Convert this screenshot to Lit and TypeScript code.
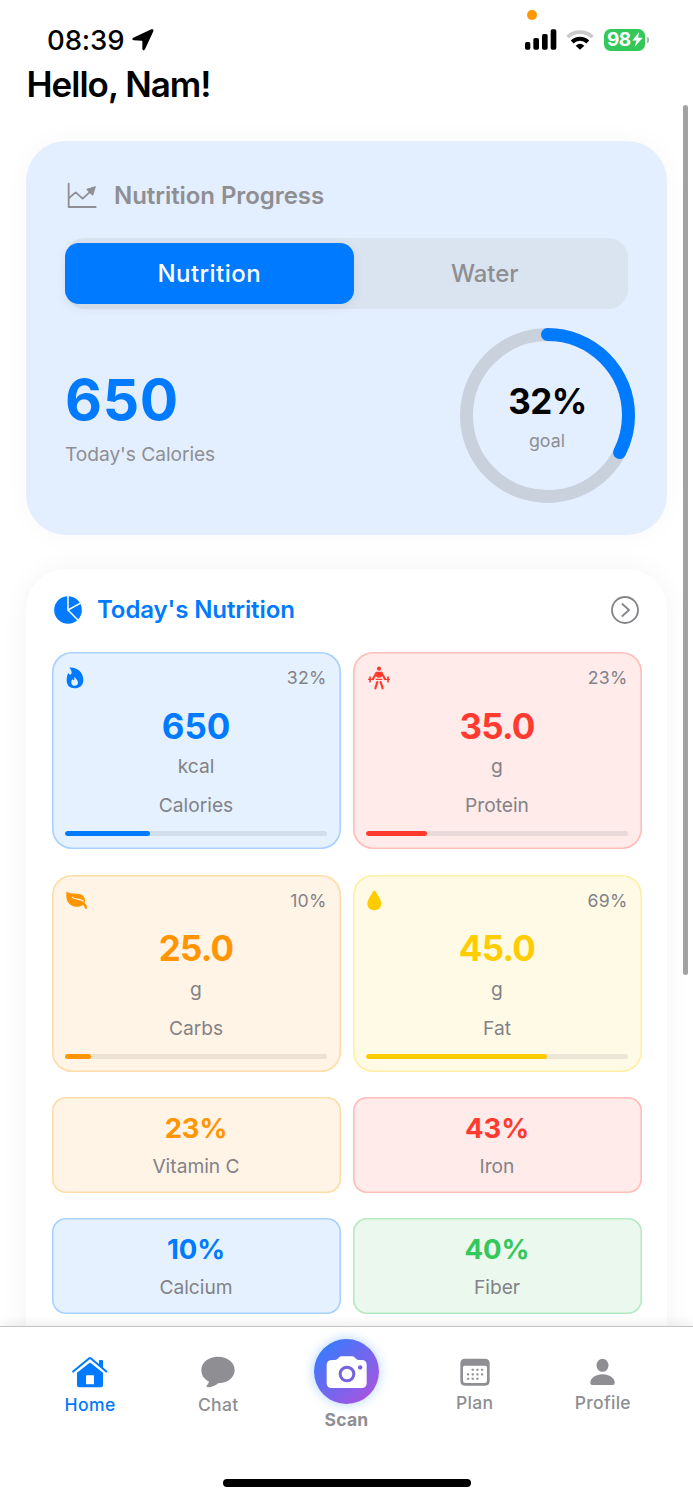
import { LitElement, html, svg, css, nothing } from "lit";
import { customElement, property } from "lit/decorators.js";

const icons: Record<string, unknown> = {
  location: html`<svg width="22" height="22" viewBox="397 87 66 66"><path fill="#000" d="M455 88 L401 113 Q394 118 402 121 L426 122 Q428 122 428 124 L428 147 Q431 155 436 148 L461 94 Q463 86 455 88Z"/></svg>`,
  signal: html`<svg width="32" height="21" viewBox="75 86 96 63"><rect x="75" y="125" width="16" height="23" rx="5"/><rect x="100" y="113" width="17" height="35" rx="5"/><rect x="126" y="101" width="17" height="47" rx="5"/><rect x="152" y="87" width="17" height="61" rx="5"/></svg>`,
  wifi: html`<svg width="28" height="21" viewBox="199 86 84 63"><g fill="none"><path stroke="#cbcbcb" stroke-width="11" d="M203.500 110 A55 55 0 0 1 278.500 110"/><path stroke="#000" stroke-width="12" d="M217.500 125 A34 34 0 0 1 264.500 125"/></g><path d="M241 148 L228 136 Q241 125 254 136Z"/></svg>`,
  bolt: html`<svg width="11" height="15" viewBox="396 97 32 46"><path fill="#fff" d="M417 97 L396 123 H409 L403 143 L428 115 H414Z"/></svg>`,
  chart: html`<svg width="31" height="27" viewBox="143 158 93 81"><g fill="none" stroke="#8e8e93" stroke-width="5.500" stroke-linecap="round" stroke-linejoin="round"><path d="M148 163 V233 H229"/><path d="M149 206 L169 189 L190 208 L217 183"/></g><path fill="#8e8e93" stroke="#8e8e93" stroke-width="3" stroke-linejoin="round" d="M228 172 L202 180 L220 198Z"/></svg>`,
  pie: html`<svg width="28" height="28" viewBox="102 710 84 84"><circle cx="144" cy="752" r="41.500" fill="#007aff"/><path d="M144 706 V752 L186 729 M144 752 L176 784" fill="none" stroke="#fff" stroke-width="4.500"/></svg>`,
  more: html`<svg width="28" height="28" viewBox="798 49 84 84"><g fill="none" stroke="#85858a" stroke-width="5.500"><circle cx="840" cy="91" r="39"/><path d="M832 73 L852 91 L832 109" stroke-linecap="round" stroke-linejoin="round"/></g></svg>`,
  flame: html`<svg width="18" height="22" viewBox="77 82 54 66"><path fill="currentColor" d="M87 84 C110 82 129 98 129 121 C129 137 118 146 103 146 C88 146 79 137 79 122 C79 112 81 106 84 100 C86 103 88 105 91 105 C97 100 93 90 87 84Z"/><path fill="#e5f1ff" d="M103 111 C105 117 113 120 113 129 C113 135 108 138 103 138 C97 138 93 134 93 129 C93 124 94 121 96 119 C98 121 99 122 101 122 C103 119 101 114 103 111Z"/></svg>`,
  lifter: html`<svg width="24" height="24" viewBox="67 258 72 72"><g fill="none" stroke="currentColor" stroke-linecap="round" stroke-linejoin="round"><path stroke-width="6.500" d="M95 279 L85 297 M111 279 L121 297"/><path stroke-width="6.500" d="M98 306 L92 325 M108 306 L114 325"/><path stroke-width="5" d="M76 291 V305 M130 291 V305"/><path stroke-width="3.500" stroke-linecap="butt" d="M70 298 H88 M118 298 H136 M93 298 H113"/></g><g fill="currentColor"><circle cx="103" cy="266" r="6.200"/><path d="M95 275.500 H111 L114 280 L111 290 Q107 293 103 293 Q99 293 95 290 L92 280Z"/></g></svg>`,
  leaf: html`<svg width="22" height="19" viewBox="79 80 65 57"><path fill="currentColor" d="M82 82 C89 90 108 85 122 90 C134 94 138 106 134 116 C140 120 142 127 141 133 Q138 136 135 132 C134 127 132 124 129 122 C119 130 99 129 88 118 C78 108 79 94 80 83 Q81 81 82 82Z"/><path d="M97 98 C104 107 120 102 130 110" fill="none" stroke="#fff4e6" stroke-width="3.500" stroke-linecap="round"/></svg>`,
  drop: html`<svg width="15" height="21" viewBox="65 76 45 62"><path fill="currentColor" d="M87 77 Q90 77 94 85 C101 97 108 106 108 116 C108 129 99 136 87 136 C75 136 66 129 66 116 C66 106 73 97 80 85 Q84 77 87 77Z"/></svg>`,
  home: html`<svg width="36" height="32" viewBox="96 107 108 96"><path fill="#007aff" fill-rule="evenodd" d="M111 157 L148 128 Q150 126.500 152 128 L189 157 V193 Q189 201 181 201 H119 Q111 201 111 193Z M140 165 Q138 165 138 167 V192 H162 V167 Q162 165 160 165Z"/><path fill="#007aff" d="M177 133 V122 Q177 119 180 119 H186 Q189 119 189 122 V143Z"/><path d="M99.500 153.500 L147 114.500 Q150 112 153 114.500 L199 153.500" fill="none" stroke="#007aff" stroke-width="6" stroke-linecap="round"/></svg>`,
  chat: html`<svg width="34" height="32" viewBox="482 107 102 96"><path fill="#8e8e93" d="M533 109 C561 109 583 126 583 149 C583 172 561 189 533 189 C527 195 514 201 502 201 Q496 200 499 196 C503 192 506 188 505 183 C491 176 483 164 483 149 C483 126 505 109 533 109Z"/></svg>`,
  camera: html`<svg width="42" height="34" viewBox="856 102 126 102"><path fill="#fff" d="M875 117 H882 Q887 117 891 113 L894 110 Q898 106 904 106 H933 Q939 106 943 110 L946 113 Q950 117 955 117 H963 Q978 117 978 132 V186 Q978 201 963 201 H873 Q858 201 858 186 V132 Q858 117 875 117Z"/><circle cx="919" cy="159" r="20.500" fill="none" stroke="#7664df" stroke-width="9"/><circle cx="958.500" cy="139.500" r="6.500" fill="#7d60dd"/></svg>`,
  calendar: html`<svg width="30" height="28" viewBox="479 112 90 84"><path fill="#8e8e93" fill-rule="evenodd" d="M494 114 H554 Q568 114 568 128 V181 Q568 195 554 195 H494 Q480 195 480 181 V128 Q480 114 494 114Z M493 135 Q488 135 488 140 V180 Q488 187 495 187 H553 Q560 187 560 180 V140 Q560 135 555 135Z"/>${[
    [517, 147], [531, 147], [545, 147], [503, 161], [517, 161], [531, 161], [545, 161], [503, 174], [517, 174], [531, 174],
  ].map(([x, y]) => svg`<rect x=${x - 3} y=${y - 3} width="6.500" height="6.500" rx="2" fill="#8e8e93"/>`)}</svg>`,
  profile: html`<svg width="25" height="28" viewBox="871 112 75 84"><ellipse cx="908.500" cy="134" rx="18" ry="19.500" fill="#8e8e93"/><path fill="#8e8e93" d="M880 193 Q872 193 872 186 C872 172 888 161 908.500 161 C929 161 945 172 945 186 Q945 193 937 193Z"/></svg>`,
};

@customElement("nutrient-card")
class NutrientCard extends LitElement {
  @property() icon = "";
  @property() tone = "blue";
  @property() value = "";
  @property() unit = "";
  @property() label = "";
  @property() percent = "";
  @property({ type: Number }) fill = 0;

  static styles = css`
    :host { display: block; min-width: 0; }
    svg { display: block; }
    .card { box-sizing: border-box; height: 100%; box-shadow: inset 0 0 0 1.600px var(--line); background: var(--bg); color: var(--main); display: flex; flex-direction: column; text-align: center; }
    .full { border-radius: 20px; padding: 14.400px 13.500px 0; }
    .mini { border-radius: 14px; padding: 15px 13.500px 0; }
    .blue { --main: #007aff; --bg: #e5f1ff; --line: #a9d1ff; }
    .red { --main: #ff3b30; --bg: #ffebea; --line: #ffbdb9; }
    .orange { --main: #ff9500; --bg: #fff4e6; --line: #ffdca8; }
    .yellow { --main: #ffcc00; --bg: #fffae6; --line: #ffeea6; }
    .green { --main: #34c759; --bg: #eaf8ed; --line: #b6eac3; }
    .top { display: flex; height: 24px; align-items: center; justify-content: space-between; }
    .icon { display: flex; padding-left: 1px; }
    .percent { margin-right: 0.500px; font-size: 17.700px; font-weight: 420; letter-spacing: 0.200px; line-height: 24px; color: #828287; }
    .value { margin-top: 13.200px; font-size: 35px; font-weight: 700; line-height: 44px; letter-spacing: -0.100px; }
    .decimal { letter-spacing: -0.800px; }
    .unit, .label { color: #828287; font-size: 19.200px; line-height: 24px; letter-spacing: 0; }
    .unit { margin-top: 6.600px; }
    .label { margin-top: 15.100px; }
    .track { margin-top: 13.700px; height: 5px; border-radius: 3px; background: rgba(60, 60, 67, 0.1); overflow: hidden; }
    .bar { height: 100%; border-radius: 3px; background: var(--main); }
    .mini .value { margin-top: 0; font-size: 27.500px; line-height: 32px; }
    .mini .label { margin-top: 10px; }
  `;

  render() {
    const mini = !this.unit;
    const decimal = this.value.includes(".");
    return html`<div class="card ${this.tone} ${mini ? "mini" : "full"}">
      ${mini ? nothing : html`<div class="top"><span class="icon">${icons[this.icon]}</span><span class="percent">${this.percent}</span></div>`}
      <div class="value ${decimal ? "decimal" : ""}">${this.value}</div>
      ${mini ? nothing : html`<div class="unit">${this.unit}</div>`}
      <div class="label">${this.label}</div>
      ${mini ? nothing : html`<div class="track"><div class="bar" style="width:${this.fill}%"></div></div>`}
    </div>`;
  }
}

@customElement("app-root")
class AppRoot extends LitElement {
  static styles = css`
    :host { display: flex; flex-direction: column; position: relative; width: 693px; height: 1500px; overflow: hidden; background: #fff; font-family: Inter, "Liberation Sans", sans-serif; color: #000; }
    svg { display: block; }
    .status { flex: none; height: 62px; display: flex; align-items: flex-start; padding: 24px 44px 0 47px; box-sizing: border-box; }
    .time { font-size: 27.500px; font-weight: 500; line-height: 32px; letter-spacing: -0.100px; width: 85px; }
    .loc { padding-top: 5px; }
    .sys { margin-left: auto; display: flex; align-items: center; height: 31px; }
    .wifi { margin: 0 10px 0 9.300px; }
    .battery { display: flex; align-items: center; justify-content: center; gap: 1.500px; width: 41px; height: 22px; border-radius: 6.500px; background: #34c759; color: #fff; font-size: 19px; font-weight: 700; line-height: 22px; letter-spacing: -0.800px; }
    .nub { width: 2.300px; height: 6px; margin-left: 1.300px; border-radius: 0 3px 3px 0; background: #b0b0b0; }
    .dot { position: absolute; left: 527px; top: 10px; width: 10px; height: 10px; border-radius: 50%; background: #ff9500; }
    .hello { flex: none; margin: 0 0 0 26.500px; height: 45px; font-size: 35px; font-weight: 600; line-height: 45px; letter-spacing: -1px; }
    .panels { flex: 1; min-height: 0; overflow: hidden; padding: 34px 26px 0; margin: 0; }
    .progress { box-sizing: border-box; height: 394px; padding: 34px 39px 0; border-radius: 40px; background: #e3efff; box-shadow: 0 0 28px rgba(0, 0, 0, 0.03); }
    .head { display: flex; align-items: center; height: 40px; font-size: 24px; font-weight: 600; color: #8e8e93; letter-spacing: -0.060px; }
    .head .text { margin-left: 15.500px; }
    .head .ico { margin-left: 2px; }
    .progress .ico { margin: 1px 0.500px 0 2px; }
    .seg { display: flex; align-items: center; margin-top: 23px; height: 70.500px; border-radius: 20px; background: #d9e4f0; font-size: 24px; font-weight: 500; text-align: center; color: #8e8e93; }
    .seg .on { width: 288.500px; height: 61.500px; line-height: 61.500px; border-radius: 14px; background: #007aff; color: #fff; box-shadow: 0 3px 12px rgba(0, 0, 0, 0.07); letter-spacing: 0.450px; }
    .seg .off { flex: 1; padding-right: 12px; }
    .row { display: flex; justify-content: space-between; margin: 19.500px -6.500px 0 0; }
    .big { margin-top: 41.700px; font-size: 57px; font-weight: 700; line-height: 60px; color: #007aff; letter-spacing: 0.700px; }
    .cap { margin-top: 12.300px; font-size: 19.200px; line-height: 24px; color: #8e8e93; letter-spacing: -0.060px; }
    .ring { display: grid; width: 175px; height: 175px; }
    .ring > * { grid-area: 1 / 1; }
    .goal { text-align: center; padding-top: 50.700px; }
    .goal .pct { font-size: 35px; font-weight: 700; line-height: 44px; letter-spacing: -0.500px; padding-left: 1px; }
    .goal .word { margin-top: 6px; font-size: 17.800px; line-height: 24px; color: #8e8e93; letter-spacing: 0; }
    .today { box-sizing: border-box; margin-top: 33.500px; height: 800px; padding: 19px 25.500px 0; border-radius: 40px; background: #fff; box-shadow: 0 0 28px rgba(0, 0, 0, 0.05); }
    .today .head { height: 44px; color: #007aff; margin-bottom: 20.500px; letter-spacing: -0.100px; }
    .today .head .text { margin-left: 15.500px; }
    .today .more { margin: 0 2.500px 0 auto; }
    .grid { display: grid; grid-template-columns: 289px 289px; grid-template-rows: 197.400px 197.400px 96px 96px; column-gap: 12px; row-gap: 25.200px; }
    .tabs { flex: none; position: relative; box-sizing: border-box; height: 174px; border-top: 1px solid #c3c3c5; padding: 0 26px; background: #fff; box-shadow: 0 -3px 10px rgba(0, 0, 0, 0.07); display: grid; grid-template-columns: repeat(5, 128.200px); align-items: start; justify-content: center; }
    .tab { display: flex; flex-direction: column; align-items: center; padding-top: 28.500px; font-size: 17.500px; font-weight: 500; line-height: 22px; letter-spacing: 0.400px; color: #8e8e93; }
    .tab .name { margin-top: 6.700px; }
    .active { color: #007aff; }
    .short { padding-top: 30.500px; letter-spacing: 0.300px; }
    .scan { padding-top: 12px; font-weight: 700; letter-spacing: 0.200px; }
    .scan .name { margin-top: 4.600px; }
    .disc { width: 65px; height: 65px; border-radius: 50%; display: grid; place-items: center; background: linear-gradient(135deg, #2f7dff 5%, #af52de 95%); box-shadow: 0 0 12px rgba(0, 122, 255, 0.32); }
    .indicator { position: absolute; left: 223px; top: 1478.500px; width: 247.500px; height: 8px; border-radius: 4px; background: #000; }
    .scrollbar { position: absolute; left: 683px; top: 105px; width: 5px; height: 869.500px; border-radius: 2.500px; background: #a2a2a2; }
  `;

  render() {
    const r = 81;
    const circ = 2 * Math.PI * r;
    return html`
      <div class="status">
        <span class="time">08:39</span><span class="loc">${icons.location}</span>
        <div class="sys">${icons.signal}<span class="wifi">${icons.wifi}</span><span class="battery"><span>98</span>${icons.bolt}</span><span class="nub"></span></div>
      </div>
      <span class="dot"></span>
      <div class="hello">Hello, Nam!</div>
      <div class="panels">
        <section class="progress">
          <div class="head"><span class="ico">${icons.chart}</span><span class="text">Nutrition Progress</span></div>
          <div class="seg"><div class="on">Nutrition</div><div class="off">Water</div></div>
          <div class="row">
            <div><div class="big">650</div><div class="cap">Today's Calories</div></div>
            <div class="ring">
              <svg width="175" height="175" viewBox="0 0 175 175">
                <circle cx="87.500" cy="87.500" r=${r} fill="none" stroke="#c9d1dd" stroke-width="13"/>
                <circle cx="87.500" cy="87.500" r=${r} fill="none" stroke="#007aff" stroke-width="13" stroke-linecap="round" stroke-dasharray="${circ * 0.325} ${circ}" transform="rotate(-90 87.500 87.500)"/>
              </svg>
              <div class="goal"><div class="pct">32%</div><div class="word">goal</div></div>
            </div>
          </div>
        </section>
        <section class="today">
          <div class="head"><span class="ico">${icons.pie}</span><span class="text">Today's Nutrition</span><span class="more">${icons.more}</span></div>
          <div class="grid">
            <nutrient-card icon="flame" tone="blue" value="650" unit="kcal" label="Calories" percent="32%" fill="32.500"></nutrient-card>
            <nutrient-card icon="lifter" tone="red" value="35.0" unit="g" label="Protein" percent="23%" fill="23.300"></nutrient-card>
            <nutrient-card icon="leaf" tone="orange" value="25.0" unit="g" label="Carbs" percent="10%" fill="10"></nutrient-card>
            <nutrient-card icon="drop" tone="yellow" value="45.0" unit="g" label="Fat" percent="69%" fill="69.200"></nutrient-card>
            <nutrient-card tone="orange" value="23%" label="Vitamin C"></nutrient-card>
            <nutrient-card tone="red" value="43%" label="Iron"></nutrient-card>
            <nutrient-card tone="blue" value="10%" label="Calcium"></nutrient-card>
            <nutrient-card tone="green" value="40%" label="Fiber"></nutrient-card>
          </div>
        </section>
      </div>
      <nav class="tabs">
        <div class="tab active">${icons.home}<span class="name">Home</span></div>
        <div class="tab">${icons.chat}<span class="name">Chat</span></div>
        <div class="tab scan"><span class="disc">${icons.camera}</span><span class="name">Scan</span></div>
        <div class="tab short">${icons.calendar}<span class="name">Plan</span></div>
        <div class="tab short">${icons.profile}<span class="name">Profile</span></div>
      </nav>
      <span class="indicator"></span>
      <span class="scrollbar"></span>
    `;
  }
}
